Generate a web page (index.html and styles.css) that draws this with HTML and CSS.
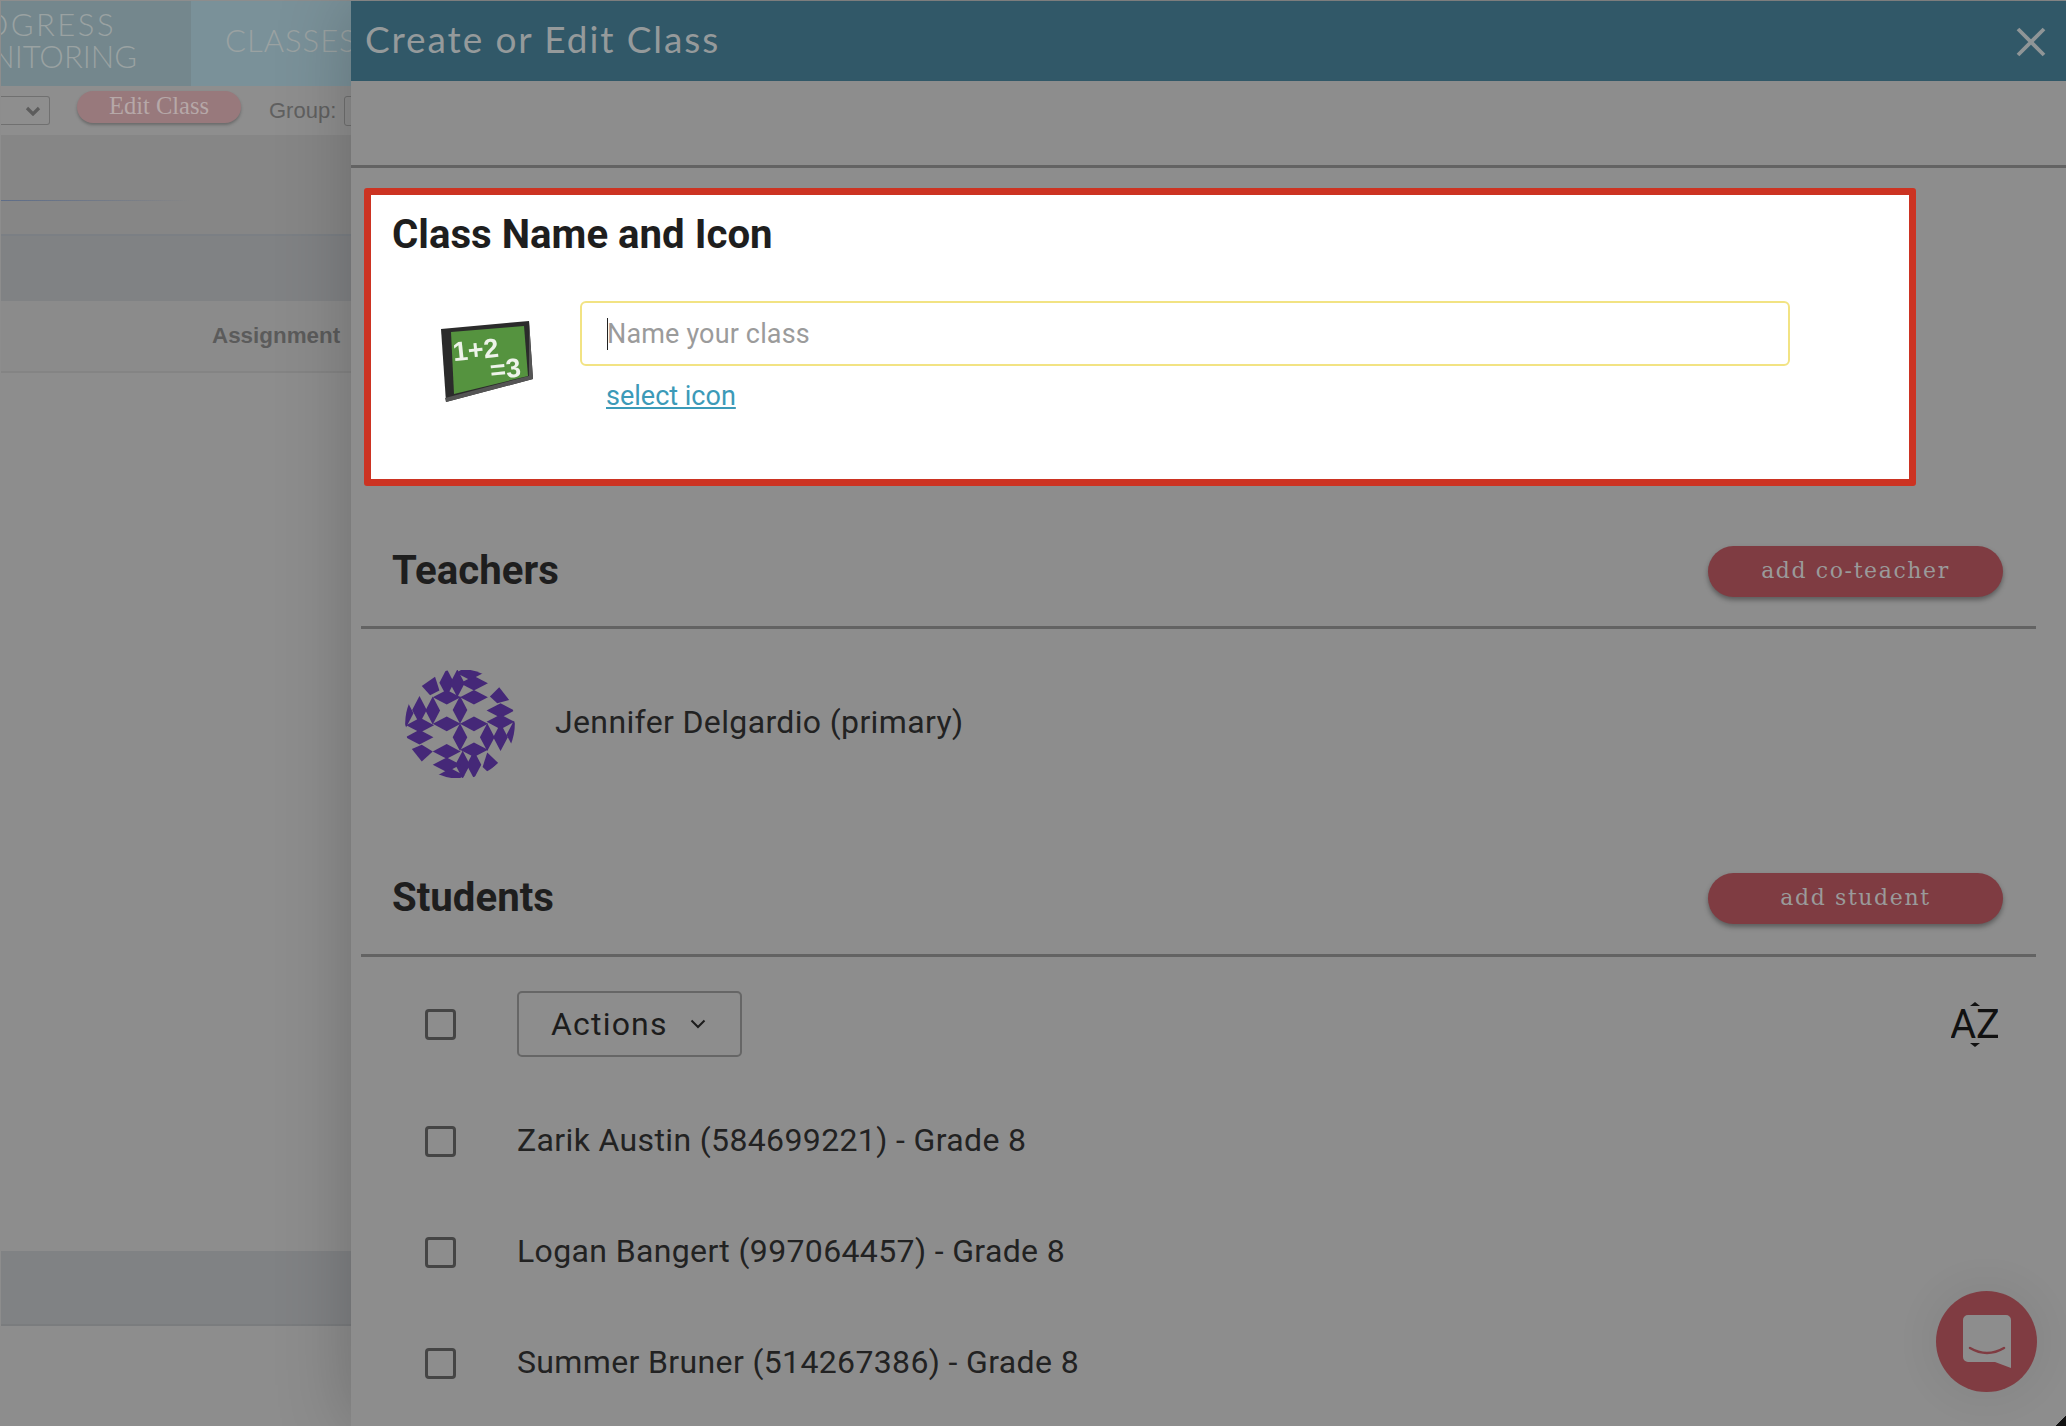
FILE: index.html
```html
<!DOCTYPE html>
<html>
<head>
	<title>Create or Edit Class</title>
	<link rel="stylesheet" href="styles.css">
</head>
<body>
	<div class="page">
		<!-- dimmed page behind the panel -->
		<div class="backdrop">
			<div class="nav">
				<div class="nav-active">
					<div class="nav-line-top">PROGRESS</div>
					<div class="nav-line-bottom">MONITORING</div>
				</div>
				<div class="nav-tab">CLASSES</div>
			</div>
			<div class="toolbar">
				<div class="select-stub">
					<svg class="select-arrow" viewBox="0 0 16 10"><path d="M2 2l6 6 6-6" fill="none" stroke="#5c5c5c" stroke-width="3.2"/></svg>
				</div>
				<div class="edit-btn">Edit Class</div>
				<div class="group-label">Group:</div>
				<div class="group-stub"></div>
			</div>
			<div class="chart-band"><div class="chart-line"></div></div>
			<div class="head-band"></div>
			<div class="col-row"><span class="col-name">Assignment</span></div>
			<div class="spacer"></div>
			<div class="foot-band"></div>
		</div>

		<div class="panel">
			<div class="panel-header">
				<div class="panel-title">Create or Edit Class</div>
				<svg class="close-icon" viewBox="0 0 30 30"><path d="M2 2l26 26M28 2L2 28" stroke="#8f9597" stroke-width="3.8" fill="none"/></svg>
			</div>
			<div class="panel-tabs"></div>

			<div class="name-box">
				<h2 class="section-title">Class Name and Icon</h2>
				<div class="name-row">
					<svg class="board-icon" viewBox="0 0 92 82">
						<polygon points="0,8 88,0 92,58 5,81" fill="#2b2b2b"/>
						<polygon points="88,0 92,58 5,81 4,77 88,55" fill="#555"/>
						<polygon points="10,11 83,5 87,55 13,73" fill="#55933f"/>
						<g transform="rotate(-6 45 40)" fill="#eef3ea" font-family="Liberation Sans, sans-serif" font-weight="bold">
							<text x="13" y="37" font-size="27">1+2</text>
							<text x="48" y="59" font-size="27">=3</text>
						</g>
					</svg>
					<div class="name-fields">
						<div class="name-input"><span class="caret"></span>Name your class</div>
						<a class="select-link" href="#">select icon</a>
					</div>
				</div>
			</div>

			<div class="section-head teachers-head">
				<h2 class="section-title">Teachers</h2>
				<div class="add-btn">add co-teacher</div>
			</div>
			<div class="teacher-row">
				<svg class="avatar" viewBox="75 60 330 325">
					<defs>
						<clipPath id="avatarClip"><circle cx="240" cy="222" r="165"/></clipPath>
						<polygon id="dv" points="0,-42 22,0 0,42 -22,0"/>
						<polygon id="dh" points="-42,0 0,-22 42,0 0,22"/>
					</defs>
					<g clip-path="url(#avatarClip)" fill="#452878">
						<use href="#dv" x="240" y="180"/><use href="#dv" x="240" y="262"/>
						<use href="#dv" x="158" y="182"/><use href="#dv" x="118" y="180"/>
						<use href="#dv" x="322" y="262"/><use href="#dv" x="362" y="262"/>
						<use href="#dv" x="200" y="98"/><use href="#dv" x="282" y="345"/>
						<use href="#dv" x="78" y="190"/><use href="#dv" x="402" y="255"/>
						<use href="#dv" x="232" y="100"/><use href="#dv" x="248" y="345"/>
						<use href="#dh" x="200" y="222"/><use href="#dh" x="282" y="222"/>
						<use href="#dh" x="282" y="100"/><use href="#dh" x="282" y="142"/>
						<use href="#dh" x="200" y="305"/><use href="#dh" x="200" y="345"/>
						<use href="#dh" x="118" y="262"/><use href="#dh" x="362" y="182"/>
						<use href="#dh" x="120" y="226"/><use href="#dh" x="362" y="216"/>
						<use href="#dh" x="200" y="142"/><use href="#dh" x="282" y="300"/>
						<use href="#dh" x="270" y="68"/><use href="#dh" x="212" y="378"/>
						<polygon points="125,108 165,80 178,122 150,136"/>
						<polygon points="330,140 358,112 388,150 352,160"/>
						<polygon points="95,298 125,285 158,305 125,335"/>
						<polygon points="308,352 322,308 355,340 325,368"/>
					</g>
				</svg>
				<div class="person-name">Jennifer Delgardio (primary)</div>
			</div>

			<div class="section-head students-head">
				<h2 class="section-title">Students</h2>
				<div class="add-btn">add student</div>
			</div>
			<div class="actions-row">
				<span class="check"></span>
				<div class="actions-btn">Actions
					<svg class="chevron" viewBox="0 0 16 10"><path d="M1.5 1.5L8 8l6.5-6.5" fill="none" stroke="#1c1c1c" stroke-width="2"/></svg>
				</div>
				<svg class="sort-icon" viewBox="0 0 47 45">
					<text x="-1" y="36" font-family="Roboto, sans-serif" font-size="40" fill="#111">AZ</text>
					<path d="M19 4l5-4 5 4zM19 41h10l-5 4z" fill="#111"/>
				</svg>
			</div>
			<div class="student-list">
				<div class="student-row"><span class="check"></span><span class="student-name">Zarik Austin (584699221) - Grade 8</span></div>
				<div class="student-row"><span class="check"></span><span class="student-name">Logan Bangert (997064457) - Grade 8</span></div>
				<div class="student-row"><span class="check"></span><span class="student-name">Summer Bruner (514267386) - Grade 8</span></div>
			</div>
		</div>
	</div>

	<div class="chat-btn">
		<svg viewBox="0 0 48 53" class="chat-icon">
			<path d="M5 0h38a5 5 0 0 1 5 5v48l-16-6H5a5 5 0 0 1-5-5V5a5 5 0 0 1 5-5z" fill="#8d8d8d"/>
			<path d="M7 33q17 10 34 0" fill="none" stroke="#803c42" stroke-width="2.500" stroke-linecap="round"/>
		</svg>
	</div>
	<div class="screen-corner"></div>
</body>
</html>
```

FILE: styles.css
```css
html, body {
	margin: 0;
	height: 100%;
	overflow: hidden;
}

body {
	font-family: Roboto, sans-serif;
	background-color: #8d8d8d;
	color: #222;
}

.page {
	display: flex;
	height: 1426px;
	box-sizing: border-box;
	padding: 1px 0 0 1px;
}

/* Dimmed page behind the panel */
.backdrop {
	width: 350px;
	flex-shrink: 0;
	display: flex;
	flex-direction: column;
	overflow: hidden;
}

.nav {
	height: 85px;
	display: flex;
	flex-shrink: 0;
	font-family: Lato, sans-serif;
	font-size: 31px;
	font-weight: 300;
	color: #9aa2a2;
}

.nav-active {
	width: 190px;
	flex-shrink: 0;
	overflow: hidden;
	padding-top: 7px;
	box-sizing: border-box;
	display: flex;
	flex-direction: column;
	align-items: flex-end;
	line-height: 32px;
	white-space: nowrap;
	background-color: #74878d;
}

.nav-line-top {
	margin-right: 75px;
	flex-shrink: 0;
	letter-spacing: 2.5px;
}

.nav-line-bottom {
	margin-right: 54px;
	flex-shrink: 0;
}

.nav-tab {
	flex: 1;
	padding: 23px 0 0 34px;
	line-height: 32px;
	letter-spacing: 1px;
	background-color: #7a9199;
	white-space: nowrap;
}

.toolbar {
	height: 49px;
	flex-shrink: 0;
	display: flex;
	align-items: center;
	background-color: #8e8e8e;
}

.select-stub {
	width: 49px;
	height: 29px;
	flex-shrink: 0;
	border: 1px solid #707070;
	border-left: 0;
	border-radius: 0 3px 3px 0;
	display: flex;
	align-items: center;
	justify-content: flex-end;
	padding-right: 8px;
	box-sizing: border-box;
}

.select-arrow {
	width: 16px;
	height: 10px;
}

.edit-btn {
	width: 164px;
	height: 32px;
	margin: -8px 0 0 27px;
	flex-shrink: 0;
	border-radius: 16px;
	background-color: #98797c;
	box-shadow: 0 2px 3px rgba(0, 0, 0, 0.25);
	text-align: center;
	font-family: "Liberation Serif", serif;
	font-size: 24.5px;
	line-height: 30px;
	color: #b6a8a8;
}

.group-label {
	margin-left: 28px;
	font-family: "Liberation Sans", sans-serif;
	font-size: 22px;
	color: #606060;
}

.group-stub {
	width: 20px;
	height: 28px;
	margin-left: 8px;
	flex-shrink: 0;
	border: 1px solid #707070;
	border-radius: 3px;
}

.chart-band {
	height: 101px;
	flex-shrink: 0;
	background-color: #868686;
	border-bottom: 2px solid #7b7f84;
	box-sizing: border-box;
	padding-top: 65px;
}

.chart-line {
	height: 1px;
	width: 190px;
	background: linear-gradient(to right, #5e6d88, #868686);
}

.head-band {
	height: 65px;
	flex-shrink: 0;
	background-color: #808284;
}

.col-row {
	height: 72px;
	flex-shrink: 0;
	display: flex;
	align-items: center;
	padding-left: 211px;
	background-color: #8b8b8b;
	border-bottom: 2px solid #848484;
	box-sizing: border-box;
}

.col-name {
	font-family: "Liberation Sans", sans-serif;
	font-size: 22.4px;
	font-weight: bold;
	color: #5b5b5b;
	white-space: nowrap;
}

.spacer {
	height: 878px;
	flex-shrink: 0;
}

.foot-band {
	height: 75px;
	flex-shrink: 0;
	background-color: #808284;
	border-bottom: 2px solid #7a7c7e;
	box-sizing: border-box;
}

/* Side panel */
.panel {
	flex: 1;
	min-width: 0;
	box-shadow: 0 0 70px rgba(0, 0, 0, 0.22);
	background-color: #8d8d8d;
	position: relative;
}

.panel-header {
	height: 80px;
	padding: 0 20px 0 14px;
	display: flex;
	align-items: center;
	justify-content: space-between;
	background-color: #315868;
}

.panel-title {
	font-family: Lato, sans-serif;
	font-size: 37px;
	letter-spacing: 1.9px;
	color: #959a9b;
	margin-top: -6px;
}

.close-icon {
	width: 30px;
	height: 30px;
	margin-top: 1px;
}

.panel-tabs {
	height: 84px;
	border-bottom: 3px solid #636363;
}

.name-box {
	width: 1552px;
	height: 298px;
	margin: 20px 0 0 13px;
	box-sizing: border-box;
	padding: 17px 21px 0;
	background-color: #fff;
	border: 7px solid #cc3322;
	border-radius: 3px;
}

.section-title {
	margin: 0;
	font-size: 40.2px;
	line-height: 46px;
	font-weight: bold;
	color: #1e1e1e;
}

.name-row {
	display: flex;
	margin-top: 43px;
}

.board-icon {
	width: 92px;
	height: 82px;
	margin: 20px 0 0 49px;
	flex-shrink: 0;
	filter: blur(0.5px);
}

.name-fields {
	margin-left: 47px;
}

.name-input {
	width: 1210px;
	height: 65px;
	box-sizing: border-box;
	padding-left: 25px;
	display: flex;
	align-items: center;
	border: 2px solid #f2e383;
	border-radius: 6px;
	font-size: 27px;
	letter-spacing: 0.15px;
	color: #9b9b9b;
}

.caret {
	width: 1px;
	height: 32px;
	margin-right: -1px;
	background-color: #222;
}

.select-link {
	display: inline-block;
	margin: 14px 0 0 26px;
	font-size: 27px;
	color: #3c9ab8;
}

.section-head {
	width: 1675px;
	margin-left: 10px;
	box-sizing: border-box;
	padding: 0 33px 0 31px;
	display: flex;
	align-items: center;
	justify-content: space-between;
	border-bottom: 3px solid #636363;
}

.teachers-head {
	height: 143px;
	padding-top: 30px;
}

.students-head {
	height: 108px;
	padding-bottom: 7px;
}

.add-btn {
	width: 295px;
	height: 51px;
	margin-top: 1px;
	border-radius: 26px;
	background-color: #7f3c42;
	box-shadow: 0 3px 5px rgba(0, 0, 0, 0.35);
	text-align: center;
	font-family: "DejaVu Serif", serif;
	font-size: 22px;
	line-height: 49px;
	letter-spacing: 1.6px;
	color: #9a9a9a;
}

.teacher-row {
	height: 220px;
	padding: 41px 0 0 54px;
	box-sizing: border-box;
	display: flex;
	align-items: flex-start;
}

.avatar {
	width: 110px;
	height: 108px;
	flex-shrink: 0;
}

.person-name {
	margin: 30px 0 0 40px;
	font-size: 32px;
	letter-spacing: 0.36px;
	line-height: 44px;
	color: #222;
}

.actions-row {
	width: 1675px;
	margin: 34px 0 0 10px;
	height: 66px;
	display: flex;
	align-items: center;
	box-sizing: border-box;
	padding: 0 38px 0 64px;
}

.check {
	width: 31px;
	height: 31px;
	box-sizing: border-box;
	flex-shrink: 0;
	border: 3.5px solid #454545;
	border-radius: 4px;
	margin-right: 61px;
}

.actions-btn {
	width: 225px;
	height: 66px;
	box-sizing: border-box;
	padding-left: 32px;
	display: flex;
	align-items: center;
	border: 2px solid #666;
	border-radius: 5px;
	font-size: 32px;
	letter-spacing: 1.2px;
	color: #1c1c1c;
}

.chevron {
	width: 16px;
	height: 10px;
	margin-left: 22px;
}

.sort-icon {
	width: 47px;
	height: 45px;
	margin-left: auto;
}

.student-list {
	margin: 29px 0 0 74px;
}

.student-row {
	height: 111px;
	display: flex;
	align-items: center;
	font-size: 32px;
	letter-spacing: 0.36px;
	color: #222;
}

.student-name {
	margin-top: -3px;
}

/* Chat launcher over the panel */
.chat-btn {
	position: fixed;
	left: 1936px;
	top: 1291px;
	width: 101px;
	height: 101px;
	border-radius: 50%;
	display: flex;
	align-items: center;
	justify-content: center;
	background-color: #803c42;
	box-shadow: 0 0 45px rgba(0, 0, 0, 0.08);
}

.chat-icon {
	width: 48px;
	height: 53px;
}

.screen-corner {
	position: fixed;
	right: 0;
	bottom: 0;
	width: 10px;
	height: 10px;
	background: linear-gradient(135deg, transparent 50%, #111 50%);
}
```
